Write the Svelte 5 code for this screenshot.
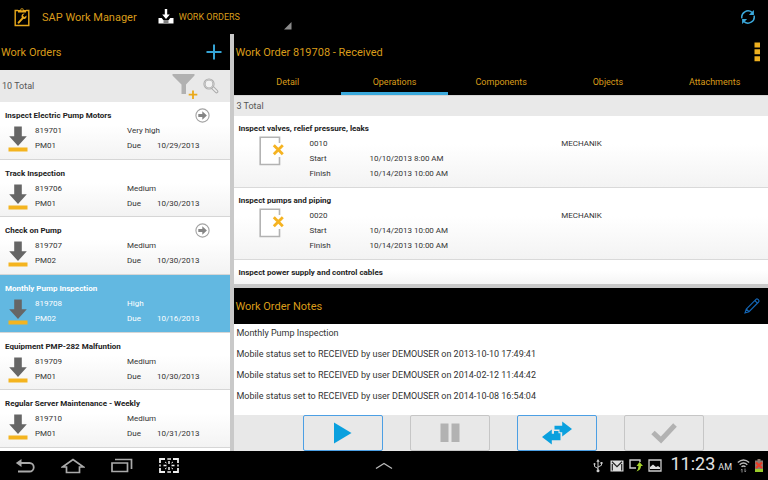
<script>
  let selected = $state('819708');
  let activeTab = $state('Operations');
  let view = $state('WORK ORDERS');

  const orders = [
    { id: '819701', title: 'Inspect Electric Pump Motors', type: 'PM01', priority: 'Very high', due: '10/29/2013', open: true },
    { id: '819706', title: 'Track Inspection', type: 'PM01', priority: 'Medium', due: '10/30/2013' },
    { id: '819707', title: 'Check on Pump', type: 'PM02', priority: 'Medium', due: '10/30/2013', open: true },
    { id: '819708', title: 'Monthly Pump Inspection', type: 'PM02', priority: 'High', due: '10/16/2013' },
    { id: '819709', title: 'Equipment PMP-282 Malfuntion', type: 'PM01', priority: 'Medium', due: '10/30/2013' },
    { id: '819710', title: 'Regular Server Maintenance - Weekly', type: 'PM01', priority: 'Medium', due: '10/31/2013' }
  ];

  const tabs = ['Detail', 'Operations', 'Components', 'Objects', 'Attachments'];

  const operations = [
    { no: '0010', title: 'Inspect valves, relief pressure, leaks', start: '10/10/2013 8:00 AM', finish: '10/14/2013 10:00 AM', center: 'MECHANIK' },
    { no: '0020', title: 'Inspect pumps and piping', start: '10/14/2013 10:00 AM', finish: '10/14/2013 10:00 AM', center: 'MECHANIK' },
    { title: 'Inspect power supply and control cables' }
  ];

  const notes = [
    'Monthly Pump Inspection',
    'Mobile status set to RECEIVED by user DEMOUSER on 2013-10-10 17:49:41',
    'Mobile status set to RECEIVED by user DEMOUSER on 2014-02-12 11:44:42',
    'Mobile status set to RECEIVED by user DEMOUSER on 2014-10-08 16:54:04'
  ];
</script>

<div class="app">
  <header class="topbar">
    <svg class="logo" width="16" height="20" viewBox="0 0 16 20" aria-hidden="true">
      <path d="M4 3.500H1.200v15h13.600v-15H12" fill="none" stroke="#e8a91c" stroke-width="1.400" />
      <path d="M4 5.500V3h2.300a1.700 1.700 0 0 1 3.400 0H12v2.500z" fill="#e8a91c" />
      <circle cx="8" cy="2.800" r=".8" fill="#000" />
      <path d="M4.600 15.600l4.600-5" stroke="#e8a91c" stroke-width="2" stroke-linecap="round" />
      <path d="M12.400 8.400l-1.800 1.500-1.300-.4-.3-1.300 1.600-1.600C9 6.400 7.400 7.600 7.500 9.500c.1 1.500 1.400 2.600 3 2.400 1.600-.3 2.300-1.900 1.900-3.500z" fill="#e8a91c" />
    </svg>
    <h1>SAP Work Manager</h1>
    <label class="spinner">
      <svg width="16" height="16" viewBox="0 0 16 16" aria-hidden="true">
        <path d="M6.800 0h2.400v5.500h2.600L8 10 4.200 5.500h2.600z" fill="#fff" />
        <path d="M.5 9h3.200l2 2.600h4.600l2-2.600h3.200v5.500H.5z" fill="#fff" />
        <path d="M5.500 13h5" stroke="#000" />
      </svg>
      <select bind:value={view} aria-label="View">
        <option>WORK ORDERS</option>
      </select>
      <svg class="corner" width="8" height="8" viewBox="0 0 8 8" aria-hidden="true">
        <path d="M7.500 0v7.500H0z" fill="#8b8b8b" />
      </svg>
    </label>
    <button class="sync" aria-label="Synchronize">
      <svg width="16" height="16" viewBox="0 0 16 16">
        <path d="M1.900 9.300A6.200 6.200 0 0 1 12 3.400M14.100 6.700A6.200 6.200 0 0 1 4 12.600" fill="none" stroke="#3ba9dc" stroke-width="1.500" />
        <path d="M13.900 1v5H8.900zM2.100 15v-5h5z" fill="#3ba9dc" />
      </svg>
    </button>
  </header>

  <main>
    <section class="orders">
      <div class="pane-head">
        <h2>Work Orders</h2>
        <button class="add" aria-label="Add work order">
          <svg width="16" height="16" viewBox="0 0 16 16">
            <path d="M8 .5v15M.5 8h15" stroke="#35a3d4" stroke-width="2" />
          </svg>
        </button>
      </div>
      <div class="count tall">
        <span>10 Total</span>
        <button aria-label="Filter">
          <svg width="27" height="26" viewBox="0 0 27 26">
            <path d="M1.500 1h22v1.500l-8.500 9V21h-4.500v-9.500l-9-9z" fill="#b1b1b1" />
            <path d="M22 17.500v8.500M17.700 21.700h8.600" stroke="#eaa91a" stroke-width="1.800" />
          </svg>
        </button>
        <button aria-label="Search">
          <svg width="16" height="16" viewBox="0 0 16 16">
            <path d="M9.500 9.500l4 4" stroke="#aaa" stroke-width="3.600" stroke-linecap="round" />
            <path d="M9.900 9.900l3.600 3.600" stroke="#eee" stroke-width="1.600" stroke-linecap="round" />
            <circle cx="6" cy="6" r="4.500" fill="#f2f2f2" stroke="#aaa" stroke-width="2.200" />
            <circle cx="6" cy="6" r="4.500" fill="none" stroke="#ddd" stroke-width=".6" />
          </svg>
        </button>
      </div>
      <ul class="order-list">
        {#each orders as order (order.id)}
          <li>
            <button class="order" class:selected={selected === order.id} onclick={() => (selected = order.id)}>
              <span class="order-title">
                <b>{order.title}</b>
                {#if order.open}
                  <svg width="15" height="15" viewBox="0 0 15 15" aria-hidden="true">
                    <circle cx="7.500" cy="7.500" r="6.600" fill="#fff" stroke="#a3a3a3" stroke-width="1.100" />
                    <path d="M3.300 6h4V3.300l4.600 4.200-4.600 4.200V9h-4z" fill="#858585" />
                  </svg>
                {/if}
              </span>
              <span class="order-body">
                <svg width="20" height="26" viewBox="0 0 20 26" aria-hidden="true">
                  <path d="M6.200.5h7.600v9.800h5L10 20 1.200 10.300h5z" fill="#666" />
                  <rect x=".5" y="21.500" width="19" height="4" fill="#f4b41f" />
                </svg>
                <span class="col-id">{order.id}<br />{order.type}</span>
                <span>{order.priority}<br /><span class="due">Due</span>{order.due}</span>
              </span>
            </button>
          </li>
        {/each}
      </ul>
    </section>

    <section class="detail">
      <div class="pane-head">
        <h2>Work Order 819708 - Received</h2>
        <button class="menu" aria-label="More options">
          <svg width="6" height="20" viewBox="0 0 6 20">
            <path d="M.5.500h5.500v5H.5zM.5 7.300h5.500v5H.5zM.5 14.200h5.500v5H.5z" fill="#eeb01f" />
          </svg>
        </button>
      </div>
      <nav class="tabs">
        {#each tabs as tab}
          <button class:active={activeTab === tab} onclick={() => (activeTab = tab)}>{tab}</button>
        {/each}
      </nav>
      <div class="count">3 Total</div>
      <ul class="operations">
        {#each operations as op (op.title)}
          <li>
            <b>{op.title}</b>
            {#if op.no}
              <div class="op-body">
                <svg width="26" height="30" viewBox="0 0 26 30" aria-hidden="true">
                  <path d="M20.500 7V1.200H1.200v27.300h19.300V21" fill="#fff" stroke="#b3b3b3" stroke-width="1.600" />
                  <path d="M14.800 9.200l9 9M23.800 9.200l-9 9" stroke="#f5b321" stroke-width="2.800" />
                </svg>
                <span class="op-label">{op.no}<br />Start<br />Finish</span>
                <span class="op-dates"><br />{op.start}<br />{op.finish}</span>
                <span class="op-center">{op.center}</span>
              </div>
            {/if}
          </li>
        {/each}
      </ul>
      <div class="pane-head notes-head">
        <h2>Work Order Notes</h2>
        <button class="edit" aria-label="Edit notes">
          <svg width="16" height="16" viewBox="0 0 16 16">
            <path d="M1 15l1.300-4L12 1.300q1-.9 2 .1l.6.6q.9 1 0 2L5 13.700zM2.300 11L5 13.700M10.800 2.500l2.800 2.800" fill="none" stroke="#1467b8" stroke-width="1.100" />
          </svg>
        </button>
      </div>
      <div class="notes">
        {#each notes as note}
          <p>{note}</p>
        {/each}
      </div>
      <div class="actions">
        <button aria-label="Start">
          <svg width="20" height="22" viewBox="0 0 20 22"><path d="M1 .5v21L18.500 11z" fill="#0aa0de" /></svg>
        </button>
        <button disabled aria-label="Pause">
          <svg width="20" height="20" viewBox="0 0 20 20"><path d="M.5.500h8v18.500h-8zM11.500.5h8v18.500h-8z" fill="#b2b2b2" /></svg>
        </button>
        <button aria-label="Transfer">
          <svg width="32" height="24" viewBox="0 0 32 24">
            <path d="M13.500 4.800h7.700V.5L31 8l-9.800 7.500v-4.300h-2.700V8.500h-5z" fill="#0aa0de" />
            <path d="M1 16l9.800-7.500v4.300h2.200V10h4.500v2.200h2v7h-8.700v4.300z" fill="#0aa0de" />
          </svg>
        </button>
        <button disabled aria-label="Complete">
          <svg width="26" height="22" viewBox="0 0 26 22"><path d="M2 10.500l8 7.500L24 3" fill="none" stroke="#b2b2b2" stroke-width="5" /></svg>
        </button>
      </div>
    </section>
  </main>

  <footer class="sysbar">
    <div class="sys-keys">
      <button aria-label="Back">
        <svg width="20" height="14" viewBox="0 0 20 14"><path d="M2 4h12.500a4 4 0 0 1 0 8.500H3" fill="none" stroke="#aaa" stroke-width="1.800" /><path d="M6.500 0v8L.8 4z" fill="#aaa" /></svg>
      </button>
      <button aria-label="Home">
        <svg width="24" height="16" viewBox="0 0 24 16"><path d="M1.500 9L12 1.500 22.500 9h-4v5.500h-13V9z" fill="none" stroke="#aaa" stroke-width="1.700" /></svg>
      </button>
      <button aria-label="Recent apps">
        <svg width="22" height="15" viewBox="0 0 22 15"><path d="M1 5h15.500v8.500H1zM4 1.500h16.500V11" fill="none" stroke="#aaa" stroke-width="1.700" /></svg>
      </button>
      <button aria-label="Capture screen">
        <svg width="20" height="15" viewBox="0 0 20 15">
          <path d="M1 5V1h5M14 1h5v4M19 10v4h-5M6 14H1v-4" fill="none" stroke="#eee" stroke-width="1.800" />
          <path d="M8.300 1H12M8.300 14H12M1 6.500v2M19 6.500v2M10 3v3M10 9v3M4.500 7.500h3M12.500 7.500h3" stroke="#eee" stroke-width="1.500" />
          <path d="M6 4l1.500 1M14 4l-1.500 1M6 11l1.500-1M14 11l-1.500-1" stroke="#eee" />
        </svg>
      </button>
    </div>
    <button aria-label="Open tray">
      <svg width="18" height="8" viewBox="0 0 18 8"><path d="M1 6.500l8-5 8 5" fill="none" stroke="#bbb" stroke-width="1.300" /></svg>
    </button>
    <div class="status">
      <svg class="usb" width="10" height="14" viewBox="0 0 10 14">
        <path d="M5 2v9M5 9.500L1.500 7.500V5M5 8l3.500-1.700V4" fill="none" stroke="#ccc" />
        <path d="M5 0l1.700 2.800H3.300z" fill="#ccc" />
        <circle cx="5" cy="11.700" r="1.500" fill="#ccc" />
        <circle cx="1.500" cy="5" r="1" fill="#ccc" />
        <path d="M7.500 3h2v2h-2z" fill="#ccc" />
      </svg>
      <svg width="14" height="12" viewBox="0 0 14 12">
        <path d="M.5.500h13v11H.5z" fill="#ddd" />
        <path d="M2 1.800l5 4.800 5-4.800M2.300 10.500V4M11.700 10.500V4" fill="none" stroke="#222" stroke-width="1.200" />
      </svg>
      <svg width="14" height="13" viewBox="0 0 14 13">
        <path d="M11 3V1H1v8h6" fill="none" stroke="#ccc" stroke-width="1.400" />
        <path d="M10.500 3L14 7h-2q0 4-4.500 5.500Q9.500 10 9.500 7h-2z" fill="#a5d32a" />
      </svg>
      <svg width="14" height="13" viewBox="0 0 14 13">
        <path d="M1 1h12v11H1z" fill="none" stroke="#ccc" stroke-width="1.300" />
        <path d="M2 10V8l3-2.500L8 8l2-1 2 1.500V10z" fill="#ddd" />
      </svg>
      <span class="clock">11:23<small>AM</small></span>
      <svg width="13" height="14" viewBox="0 0 13 14">
        <path d="M.8 3.500q5.700-5 11.400 0M2.700 5.700q3.800-3.400 7.600 0M4.500 7.800q2-1.800 4 0" fill="none" stroke="#bbb" stroke-width="1.400" />
        <path d="M5 13.500V10l-1 1.200M8 9.500V13l1-1.200" fill="none" stroke="#888" />
      </svg>
      <svg width="8" height="13" viewBox="0 0 8 13">
        <path d="M2.500 0h3v1.500H8V13H0V1.500h2.500z" fill="#8d7a70" />
        <path d="M0 10h8v3H0z" fill="#9acb2b" />
        <path d="M1 3.500l6 5.500M7 3.500L1 9" stroke="#ec3b25" stroke-width="2.200" />
      </svg>
    </div>
  </footer>
</div>

<style>
  :global(body) {
    margin: 0;
    background: #000;
  }

  .app {
    display: flex;
    flex-direction: column;
    height: 100vh;
    font-family: Roboto, 'Liberation Sans', sans-serif;
    font-size: 8px;
    color: #333;
    background: #000;
  }

  button {
    display: flex;
    align-items: center;
    justify-content: center;
    padding: 0;
    border: 0;
    background: none;
    font: inherit;
    color: inherit;
    cursor: pointer;
  }

  svg {
    display: block;
    flex: none;
  }

  ul {
    list-style: none;
    margin: 0;
    padding: 0;
  }

  h1,
  h2 {
    margin: 0;
    font-size: 11px;
    font-weight: 400;
    color: #d99c1a;
  }

  .topbar {
    display: flex;
    align-items: center;
    height: 34px;
    padding: 0 12px 0 14px;
  }

  .topbar h1 {
    margin-left: 12px;
  }

  .spinner {
    display: flex;
    align-items: center;
    width: 134px;
    height: 34px;
    margin-left: 21px;
  }

  .spinner select {
    flex: 1;
    margin-left: 5px;
    padding: 0;
    border: 0;
    appearance: none;
    background: none;
    font: inherit;
    font-size: 9px;
    color: #d99c1a;
  }

  .corner {
    align-self: flex-end;
    margin-bottom: 4px;
  }

  .sync {
    margin-left: auto;
  }

  main {
    flex: 1;
    display: flex;
    min-height: 0;
  }

  .orders {
    flex: 0 0 30%;
    display: flex;
    flex-direction: column;
    border-right: 4px solid #c9c9c9;
    background: #fff;
  }

  .detail {
    flex: 1;
    display: flex;
    flex-direction: column;
    min-width: 0;
    background: #fff;
  }

  .pane-head {
    display: flex;
    align-items: center;
    justify-content: space-between;
    height: 36px;
    padding: 0 8px 0 1px;
    background: #000;
  }

  .count {
    display: flex;
    align-items: center;
    height: 20px;
    padding: 0 2px;
    background: #e9e9e9;
    font-size: 9px;
    color: #555;
  }

  .tall {
    height: 32px;
    padding-right: 11px;
  }

  .tall span {
    flex: 1;
  }

  .tall button + button {
    margin-left: 5px;
  }

  .order-list {
    flex: 1;
    display: grid;
    grid-auto-rows: 1fr;
    padding-bottom: 3px;
  }

  .order-list li {
    display: flex;
    border-bottom: 1px solid #d6d6d6;
    background: linear-gradient(#fff 40%, #f3f3f3);
  }

  .order {
    flex: 1;
    flex-direction: column;
    align-items: stretch;
    justify-content: flex-start;
    padding: 6px 20px 0 5px;
    line-height: 15px;
    text-align: left;
  }

  .order.selected {
    background: #62b8e1;
    color: #fff;
  }

  .order-title {
    display: flex;
    justify-content: space-between;
  }

  b {
    font-weight: 700;
    color: #222;
  }

  .selected b {
    color: #fff;
  }

  .order-body {
    display: flex;
    padding-left: 3px;
  }

  .order-body svg {
    margin-top: 3px;
  }

  .col-id {
    width: 92px;
    margin-left: 7px;
  }

  .due {
    display: inline-block;
    width: 30px;
  }

  .tabs {
    display: flex;
    height: 25px;
    border-bottom: 1px solid #d6d6d6;
    background: #000;
  }

  .tabs button {
    flex: 1;
    padding-top: 2px;
    border-bottom: 3px solid #000;
    font-size: 9px;
    color: #d99c1a;
  }

  .tabs .active {
    border-color: #3aa9dc;
  }

  .operations {
    flex: 1 1 0;
    min-height: 0;
    overflow: hidden;
    line-height: 15px;
  }

  .operations li {
    padding: 5px 4px 6px;
    border-bottom: 1px solid #d9d9d9;
    background: linear-gradient(#fff 40%, #f3f3f3);
  }

  .operations b {
    display: block;
  }

  .op-body {
    display: flex;
    padding-left: 21px;
  }

  .op-label {
    width: 60px;
    margin-left: 24px;
  }

  .op-dates {
    flex: 0 0 38%;
  }

  .notes-head {
    border-top: 4px solid #c9c9c9;
  }

  .notes {
    display: flex;
    flex-direction: column;
    gap: 7px;
    padding: 2px 2px 12px;
    font-size: 9px;
    line-height: 14px;
  }

  .notes p {
    margin: 0;
  }

  .actions {
    display: flex;
    justify-content: center;
    gap: 27px;
    padding-left: 5px;
    background: #e8e8e8;
  }

  .actions button {
    width: 80px;
    height: 36px;
    box-sizing: border-box;
    border: 1px solid #4c9fe4;
    border-radius: 2px;
  }

  .actions button:disabled {
    border-color: #c6c6c6;
  }

  .sysbar {
    display: grid;
    grid-template-columns: 1fr auto 1fr;
    align-items: center;
    height: 29px;
    background: #000;
  }

  .sys-keys {
    display: flex;
    align-items: center;
    gap: 26px;
    padding-left: 15px;
  }

  .status {
    display: flex;
    align-items: center;
    justify-content: flex-end;
    gap: 5px;
    padding-right: 5px;
  }

  .usb {
    margin-right: 2px;
  }

  .clock {
    margin-left: 3px;
    font-size: 18px;
    line-height: 20px;
    color: #e4e4e4;
  }

  .clock small {
    margin-left: 3px;
    font-size: 9px;
  }
</style>
